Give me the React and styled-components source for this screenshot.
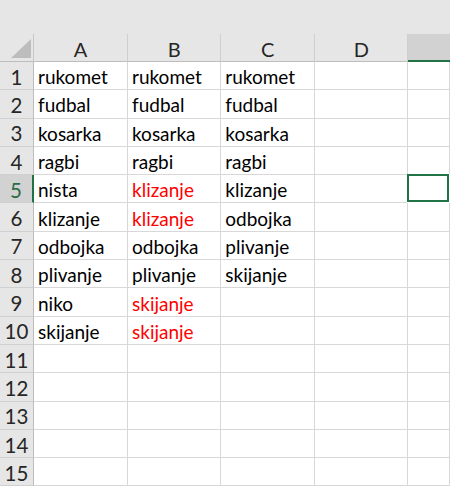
import React from "react";
import styled, { createGlobalStyle, css } from "styled-components";

const Global = createGlobalStyle`
  html, body { margin: 0; padding: 0; background: #e6e6e6; }
  body { width: 450px; height: 486px; overflow: hidden; }
`;

const GREEN = "#217346";
const FONT = `"Lato", "Noto Sans", sans-serif`;

const Page = styled.div`
  width: 450px;
  height: 486px;
  display: flex;
  flex-direction: column;
  background: #e6e6e6;
  overflow: hidden;
  font-family: ${FONT};
`;

const TopBand = styled.div`
  height: 34px;
  flex: none;
  background: #e6e6e6;
`;

const Sheet = styled.div`
  display: grid;
  grid-template-columns: 34px 94px 93.3px 93.7px 93.5px 1fr;
  grid-template-rows: 28px repeat(15, 28.3px);
  background: #ffffff;
`;

const Corner = styled.div`
  position: relative;
  background: #e6e6e6;
  border-right: 1px solid #c6c6c6;
  border-bottom: 1px solid #bdbdbd;
  box-sizing: border-box;
`;

const CornerTriangle = styled.svg`
  position: absolute;
  right: 2px;
  bottom: 3px;
`;

const ColHeader = styled.div`
  background: #e6e6e6;
  border-right: 1px solid #cfcfcf;
  border-bottom: 1px solid #bdbdbd;
  box-sizing: border-box;
  display: flex;
  align-items: center;
  justify-content: center;
  font-size: 20px;
  color: #262626;
  padding-top: 2px;
  ${(p) =>
    p.$selected &&
    css`
      background: #d2d2d2;
      border-right: none;
      border-bottom: 2px solid ${GREEN};
    `}
`;

const RowHeader = styled.div`
  background: #e6e6e6;
  border-right: 1px solid #bdbdbd;
  border-bottom: 1px solid #d0d0d0;
  box-sizing: border-box;
  display: flex;
  align-items: center;
  justify-content: center;
  font-size: 20.5px;
  color: #262626;
  padding-top: 2px;
  ${(p) =>
    p.$selected &&
    css`
      background: #d2d2d2;
      color: #2b6a47;
      border-right: 2px solid ${GREEN};
    `}
`;

const Cell = styled.div`
  background: #ffffff;
  border-right: 1px solid #d8d8d8;
  border-bottom: 1px solid #d8d8d8;
  box-sizing: border-box;
  display: flex;
  align-items: center;
  padding: 2px 0 0 4px;
  font-size: 19px;
  white-space: nowrap;
  overflow: visible;
  color: ${(p) => (p.$red ? "#ff0000" : "#000000")};
  ${(p) =>
    p.$active &&
    css`
      box-shadow: inset 0 0 0 2px ${GREEN};
      border-color: transparent;
      margin: -1px 0 0 -1px;
    `}
`;

const data = [
  ["rukomet", "rukomet", "rukomet"],
  ["fudbal", "fudbal", "fudbal"],
  ["kosarka", "kosarka", "kosarka"],
  ["ragbi", "ragbi", "ragbi"],
  ["nista", "klizanje", "klizanje"],
  ["klizanje", "klizanje", "odbojka"],
  ["odbojka", "odbojka", "plivanje"],
  ["plivanje", "plivanje", "skijanje"],
  ["niko", "skijanje", ""],
  ["skijanje", "skijanje", ""],
];

const redCells = new Set(["4-1", "5-1", "8-1", "9-1"]);

export default function App() {
  const cols = ["A", "B", "C", "D", ""];
  const rows = Array.from({ length: 15 }, (_, i) => i);
  return (
    <Page>
      <Global />
      <TopBand />
      <Sheet>
        <Corner>
          <CornerTriangle width="20" height="19" viewBox="0 0 20 19">
            <polygon points="20,0 20,19 0,19" fill="#bdbdbd" />
          </CornerTriangle>
        </Corner>
        {cols.map((c, i) => (
          <ColHeader key={"h" + i} $selected={i === 4}>
            {c}
          </ColHeader>
        ))}
        {rows.map((r) => (
          <React.Fragment key={r}>
            <RowHeader $selected={r === 4}>{r + 1}</RowHeader>
            {cols.map((_, ci) => {
              const text = (data[r] && data[r][ci]) || "";
              return (
                <Cell
                  key={ci}
                  $red={redCells.has(`${r}-${ci}`)}
                  $active={r === 4 && ci === 4}
                >
                  {text}
                </Cell>
              );
            })}
          </React.Fragment>
        ))}
      </Sheet>
    </Page>
  );
}
